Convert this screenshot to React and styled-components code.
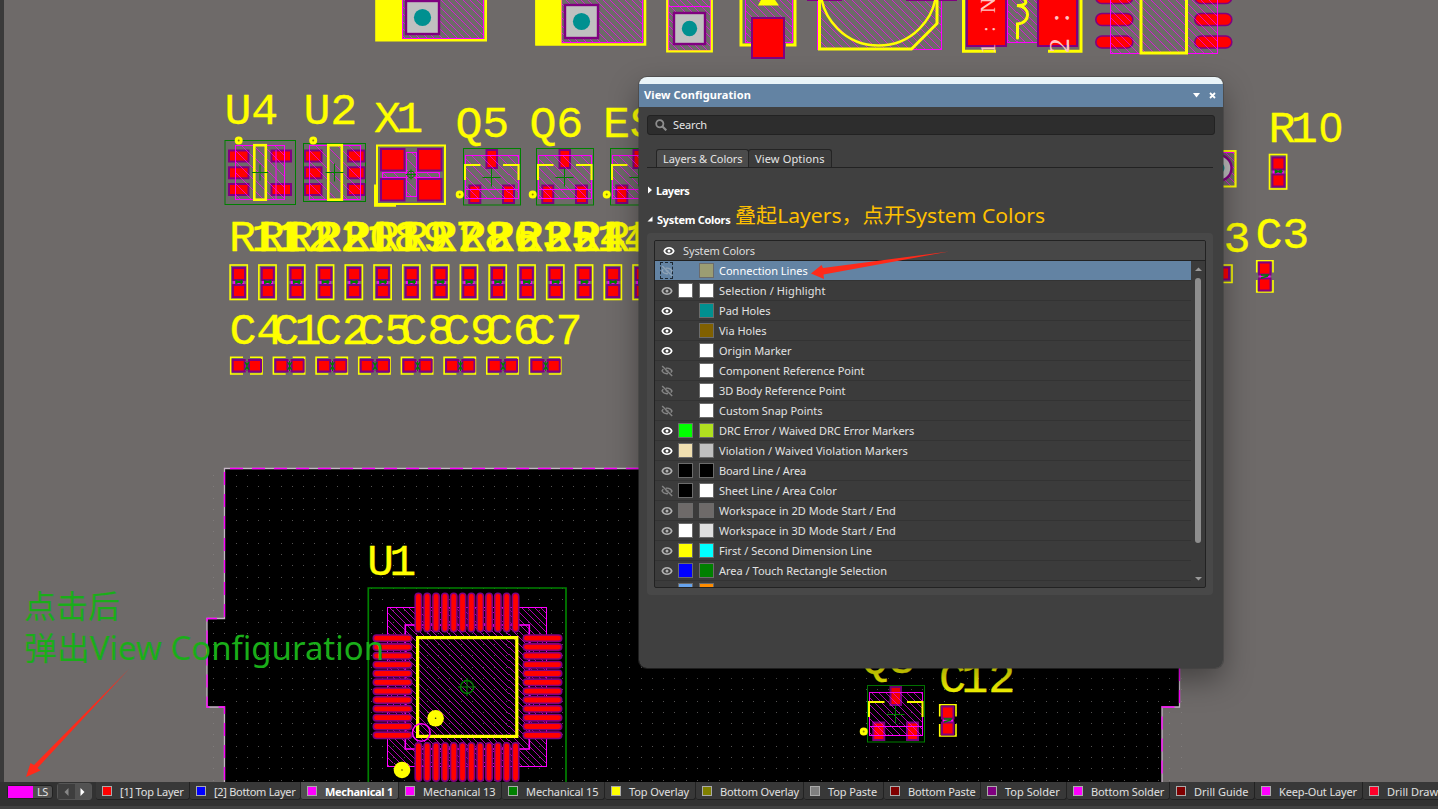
import React from "react";
import styled, { createGlobalStyle } from "styled-components";

const Y = "#ffff00";
const M = "#ff00ff";
const P = "#800080";
const R = "#ff0000";
const G = "#008000";

const GlobalStyle = createGlobalStyle`
  * { box-sizing: border-box; }
  html, body { margin: 0; padding: 0; overflow: hidden; background: #333; }
  body { font-family: "Noto Sans", "Noto Sans CJK SC", sans-serif; font-size: 11px; }
`;

const Frame = styled.div`
  position: relative;
  width: 1438px;
  height: 809px;
  overflow: hidden;
  display: flex;
  flex-direction: column;
  background: #323232;
`;

const Workspace = styled.main`
  height: 782px;
  border-left: 4px solid #3a3a3a;
  background: #6e6a69;
  overflow: hidden;
`;

const BoardSvg = styled.svg`
  display: block;
  width: 1434px;
  height: 782px;
`;

const Designator = styled.text`
  font-family: "Liberation Mono", monospace;
  font-size: 45px;
  fill: ${Y};
  stroke: ${Y};
  stroke-width: 0.3px;
  stroke-linejoin: round;
`;

const PadLabel = styled.text`
  font-family: "Liberation Serif", serif;
  fill: #ffc4c4;
`;

/* ---------- floating panel ---------- */

const Panel = styled.section`
  position: absolute;
  left: 639px;
  top: 77px;
  width: 584px;
  height: 591px;
  border-radius: 8px;
  overflow: hidden;
  background: #404040;
  display: flex;
  flex-direction: column;
`;

const PanelShadow = styled.div`
  position: absolute;
  left: 639px;
  top: 77px;
  width: 584px;
  height: 591px;
  border-radius: 8px;
  box-shadow: 0 0 0 1px rgba(60, 60, 60, 0.5), 0 12px 30px rgba(0, 0, 0, 0.38);
`;

const PanelCap = styled.div`
  height: 7px;
  background: #eaf4f8;
`;

const TitleBar = styled.header`
  height: 23px;
  background: #6383a3;
  display: flex;
  align-items: center;
  padding: 0 6px 2px 5px;
  color: #fff;
  font-weight: 700;
  font-size: 11px;
`;

const TitleIcons = styled.svg`
  width: 26px;
  height: 12px;
  margin: 1px 0 0 auto;
`;

const PanelBody = styled.div`
  flex: 1;
  padding: 8px 8px 0;
  display: flex;
  flex-direction: column;
`;

const SearchBox = styled.div`
  height: 20px;
  border: 1px solid #222;
  border-radius: 3px;
  background: #2d2d2d;
  color: #e6e6e6;
  display: flex;
  align-items: center;
  gap: 6px;
  padding: 0 0 2px 7px;
`;

const SearchIcon = styled.svg`
  width: 12px;
  height: 12px;
  margin-top: 2px;
`;

const TabStrip = styled.nav`
  display: flex;
  height: 19px;
  margin: 14px 2px 0 0;
  padding-left: 9px;
  border-bottom: 1px solid #222;
`;

const Tab = styled.div`
  width: ${(p) => p.$w}px;
  height: 18px;
  border: 1px solid #242424;
  border-bottom: 0;
  border-radius: 3px 3px 0 0;
  margin-right: -1px;
  background: ${(p) => (p.$active ? "#4b4b4b" : "#3c3c3c")};
  color: #e6e6e6;
  display: flex;
  align-items: center;
  padding-left: 6px;
  white-space: nowrap;
`;

const SectionTitle = styled.div`
  height: 16px;
  margin-top: ${(p) => p.$gap}px;
  display: flex;
  align-items: center;
  gap: 4px;
  color: #fff;
  font-weight: 700;
  font-size: 11px;
`;

const Group = styled.div`
  margin: 6px 2px 0 0;
  height: 362px;
  padding: 7px;
  border-radius: 4px;
  background: #484848;
`;

const List = styled.div`
  height: 348px;
  border: 1px solid #222;
  border-radius: 2px;
  overflow: hidden;
  background: #3b3b3b;
  display: flex;
  flex-direction: column;
`;

const ListHeader = styled.div`
  height: 20px;
  flex: none;
  border-bottom: 1px solid #222;
  background: #474747;
  color: #dedede;
  display: flex;
  align-items: center;
  padding-left: 8px;
  gap: 8px;
`;

const ListBody = styled.div`
  flex: 1;
  min-height: 0;
  display: flex;
`;

const Rows = styled.div`
  width: 536px;
  overflow: hidden;
`;

const Row = styled.div`
  height: 20px;
  border-bottom: 1px solid #333;
  background: ${(p) => (p.$selected ? "#6383a3" : "transparent")};
  color: ${(p) => (p.$selected ? "#fff" : "#e2e2e2")};
  display: grid;
  grid-template-columns: 23px 21px 20px 1fr;
  align-items: center;
`;

const EyeCell = styled.div`
  width: 13px;
  height: 17px;
  margin-left: 5px;
  outline: ${(p) => (p.$focus ? "1px dashed #1c2833" : "none")};
  outline-offset: -1px;
  display: flex;
  align-items: center;
  justify-content: flex-end;
`;

const Swatch = styled.div`
  width: 15px;
  height: 15px;
  border: 1px solid #6b6b6b;
  background: ${(p) => p.$c};
`;

const Blank = styled.div``;

const Label = styled.span`
  white-space: nowrap;
  letter-spacing: ${(p) => p.$ls || 0}px;
`;

const ScrollBar = styled.div`
  width: 14px;
  display: flex;
  flex-direction: column;
  align-items: center;
  justify-content: space-between;
  padding: 6px 0 6px;
`;

const ScrollThumb = styled.div`
  width: 6px;
  height: 265px;
  margin-bottom: 28px;
  border-radius: 3px;
  background: #8e8e8e;
`;

const ScrollArrow = styled.svg`
  width: 7px;
  height: 4px;
  flex: none;
`;

/* ---------- layer bar ---------- */

const LayerBar = styled.footer`
  height: 27px;
  padding-left: 7px;
  display: flex;
  background: #323232;
  border-bottom: 3px solid #414141;
  color: #e4e4e4;
`;

const LayerSet = styled.div`
  flex: none;
  width: 46px;
  height: 14px;
  margin: 3px 4px 0 0;
  border: 1px solid #222;
  border-radius: 3px;
  background: #505050;
  display: flex;
  align-items: center;
  line-height: 12px;
`;

const LayerSetColor = styled.div`
  width: 25px;
  height: 12px;
  margin-right: 4px;
  background: ${M};
`;

const Pager = styled.div`
  flex: none;
  width: 35px;
  height: 17px;
  margin: 1px 4px 0 0;
  border: 1px solid #555;
  border-radius: 3px;
  background: #4a4a4a;
  display: flex;
`;

const PagerButton = styled.div`
  flex: 1;
  display: flex;
  align-items: center;
  justify-content: center;
  background: ${(p) => (p.$on ? "#525252" : "#3e3e3e")};
`;

const LayerTab = styled.div`
  flex: none;
  width: ${(p) => p.$w}px;
  height: 18px;
  padding: 1px 0 0 6px;
  display: flex;
  align-items: center;
  border-right: 1px solid #222;
  border-bottom: 1px solid #222;
  border-radius: 0 0 3px 3px;
  background: ${(p) => (p.$active ? "#505050" : "#383838")};
  color: ${(p) => (p.$active ? "#fff" : "#e0e0e0")};
  font-weight: ${(p) => (p.$active ? 700 : 400)};
  white-space: nowrap;
`;

const LayerColor = styled.div`
  width: 10px;
  height: 10px;
  margin: 0 8px 1px 0;
  border: 1px solid #aaa;
  background: ${(p) => p.$c};
`;

const Notes = styled.svg`
  position: absolute;
  left: 0;
  top: 0;
  width: 1438px;
  height: 809px;
  pointer-events: none;
`;

const NoteText = styled.text`
  font-family: "Noto Sans", "Noto Sans CJK SC", sans-serif;
`;

/* ---------- board drawing ---------- */

const Hatch = ({ x, y, w, h, step = 8 }) => {
  const left = Math.floor(x) + 0.5;
  const top = Math.floor(y) + 0.5;
  const width = Math.round(w);
  const height = Math.round(h);
  let d = "";
  for (let s = -height + step / 2; s < width; s += step) {
    const k = Math.round(s);
    const x1 = Math.max(0, k);
    const y1 = x1 - k;
    const t = Math.min(width - x1, height - y1);
    if (t > 0) d += `M${left + x1} ${top + y1}l${t} ${t}`;
  }
  return (
    <g fill="none" stroke={M}>
      <path d={d} strokeWidth="0.7" shapeRendering="crispEdges" />
      <rect x={left} y={top} width={width} height={height} strokeWidth="1" />
    </g>
  );
};

const Pad = ({ x, y, w, h }) => (
  <rect x={x + 1} y={y + 1} width={w - 2} height={h - 2} fill={R} stroke={P} strokeWidth="2" />
);

const Cross = ({ x, y, s = 8 }) => (
  <path d={`M${x - s} ${y}h${2 * s}M${x} ${y - s}v${2 * s}`} stroke={G} strokeWidth="1" />
);

const Dot = ({ x, y }) => <circle cx={x} cy={y} r="2.5" fill="#8a8700" stroke={Y} strokeWidth="3" />;

const ResistorV = ({ x, y = 264.5 }) => (
  <g>
    <rect x={x + 0.8} y={y + 0.5} width="17.2" height="34.5" fill="none" stroke={Y} strokeWidth="1.6" />
    <rect x={x + 4} y={y + 15} width="11" height="5" fill={M} />
    <Pad x={x + 2.7} y={y + 2.5} w={14} h={14} />
    <Pad x={x + 2.7} y={y + 19.5} w={14} h={14} />
    <path d={`M${x + 6} ${y + 16}l7 3M${x + 6} ${y + 19}l7 -3M${x + 6} ${y + 17.5}h8`} stroke={G} strokeWidth="1.4" />
  </g>
);

const CapacitorH = ({ x }) => (
  <g>
    <path d={`M${x + 13} 357.3H${x + 0.7}V374H${x + 13}M${x + 20} 357.3H${x + 32}V374H${x + 20}`} fill="none" stroke={Y} strokeWidth="1.6" />
    <rect x={x + 14} y="361" width="5" height="10" fill={M} />
    <Pad x={x + 1.7} y={359} w={14} h={13.5} />
    <Pad x={x + 18} y={359} w={14} h={13.5} />
    <path d={`M${x + 15} 362l4 8M${x + 19} 362l-4 8M${x + 17} 361v10`} stroke={G} strokeWidth="1.2" />
  </g>
);

const CapacitorV = ({ x, y }) => (
  <g>
    <path d={`M${x + 0.7} ${y + 12.5}V${y + 0.7}H${x + 17}V${y + 12.5}M${x + 0.7} ${y + 20}V${y + 32}H${x + 17}V${y + 20}`} fill="none" stroke={Y} strokeWidth="1.6" />
    <rect x={x + 3.5} y={y + 13} width="11" height="6" fill={M} />
    <Pad x={x + 2} y={y + 1.5} w={13.5} h={14} />
    <Pad x={x + 2} y={y + 17.5} w={13.5} h={14} />
    <path d={`M${x + 5} ${y + 15}h8M${x + 5} ${y + 18}l7 -2`} stroke={G} strokeWidth="1.6" />
  </g>
);

const Transistor = ({ x, y, step = 9 }) => (
  <g transform={`translate(${x} ${y})`}>
    <rect x="0.5" y="0.5" width="57" height="56.5" fill="none" stroke={G} />
    <Pad x={22.5} y={1} w={12.5} h={20} />
    <Pad x={5.3} y={36.5} w={13} h={19.5} />
    <Pad x={39} y={36.5} w={13} h={19.5} />
    <Hatch x={2.5} y={7.5} w={53} h={43} step={step} />
    <path d="M2.5 41.5h53" stroke={M} />
    <path d="M17.5 17H2V32M40 17H55.5V32" fill="none" stroke={Y} strokeWidth="2" />
    <Cross x={28.5} y={29.5} s={9} />
    <Dot x={-3.3} y={46.5} />
  </g>
);

const Name = ({ t, x, y }) => {
  const chars = t.split("");
  let cx = x - 2.5;
  const parts = chars.map((c, i) => {
    const left = c === "1" ? cx - 4.5 : c === "0" ? cx + 1.5 : cx;
    cx += c === "1" ? 22.5 : 26.7;
    return (
      <tspan key={i} x={left} fontFamily={c === "0" ? "Liberation Sans" : undefined} fontSize={c === "0" ? 42 : undefined}>
        {c}
      </tspan>
    );
  });
  return <Designator y={y}>{parts}</Designator>;
};

const gridDots = () => {
  let d = "";
  for (let i = 0; i < 87; i++) {
    for (let j = 0; j < 28; j++) {
      const x = Math.round(213 + i * 11.25);
      const y = Math.round(475 + j * 11.28);
      if (x < 1182) d += `M${x} ${y}h1v1h-1z`;
    }
  }
  return d;
};

const HolePad = ({ x, y, s, r }) => (
  <g>
    <rect x={x + 1} y={y + 1} width={s - 2} height={s - 2} fill="#c0c0c0" stroke={P} strokeWidth="2.4" />
    <circle cx={x + s / 2} cy={y + s / 2} r={r} fill="#009090" />
  </g>
);

const QfpPads = () => {
  const pads = [];
  for (let i = 0; i < 12; i++) {
    const x = 418.4 + i * 8.83;
    const y = 638.2 + i * 8.83;
    pads.push(`M${x} 596.5V628.5M${x} 746V778M376.5 ${y}H408.5M526.5 ${y}H558.5`);
  }
  const d = pads.join("");
  return (
    <g fill="none" strokeLinecap="round">
      <path d={d} stroke={P} strokeWidth="8" />
      <path d={d} stroke={R} strokeWidth="4.8" />
    </g>
  );
};

const rNames = ["R11", "R12", "R22", "R20", "R18", "R19", "R27", "R28", "R26", "R23", "R25", "R24", "R14", "R11", "R13"];
const cNames = ["C4", "C1", "C2", "C5", "C8", "C9", "C6", "C7"];
const outline = "M639 468.5H224.5V618.5H207V707H224.5V782";
const outlineRight = "M1179.5 668V707H1162V782";

const Board = () => (
  <BoardSvg viewBox="4 0 1434 782">
    <path d="M224.5 468.5H1179.5V707H1162V782H224.5V707H207V618.5H224.5Z" fill="#000" />
    <path d={gridDots()} fill="#8c8888" opacity="0.6" shapeRendering="crispEdges" />
    {[outline, outlineRight].map((d) => (
      <g key={d} fill="none" strokeWidth="1.3">
        <path d={d} stroke="#c8b4c8" />
        <path d={d} stroke={M} strokeDasharray="13 9" />
      </g>
    ))}

    {/* connectors along the upper edge */}
    <Hatch x={402} y={-40} w={81} h={78} step={7.3} />
    <path d="M376.5 -5V40.2H485.7V-5" fill="none" stroke={Y} strokeWidth="2.6" />
    <rect x="376" y="-5" width="26" height="46" fill={Y} />
    <HolePad x={405} y={0} s={35} r={8.6} />
    <Hatch x={561} y={-40} w={81} h={82} step={7.3} />
    <path d="M536.5 -5V44.5H645V-5" fill="none" stroke={Y} strokeWidth="2.6" />
    <rect x="535.5" y="-5" width="26" height="50" fill={Y} />
    <HolePad x={564} y={4} s={35} r={8.6} />
    <Hatch x={668.5} y={-37} w={42} h={87} step={7.3} />
    <path d="M668 6.5h43" stroke={M} />
    <path d="M667.2 -5V51.3H711.8V-5" fill="none" stroke={Y} strokeWidth="2.2" />
    <HolePad x={673} y={12} s={33} r={7.7} />

    <Hatch x={745.5} y={-20} w={46.5} h={62} step={7.3} />
    <path d="M741 -5V45H752M786 45H795V-5" fill="none" stroke={Y} strokeWidth="3" />
    <path d="M758 5.5L762.5 -3H773L779 5.5Z" fill={Y} />
    <Pad x={751} y={17} w={34} h={42} />

    <Hatch x={817} y={-60} w={124} h={108.5} step={8} />
    <path d="M807 0h35M906 0h51" stroke={P} strokeWidth="2" />
    <path d="M819.5 -5V49H911.5L937 23.5V-5" fill="none" stroke={Y} strokeWidth="3" />
    <circle cx="878.5" cy="-12.5" r="58" fill="none" stroke={Y} strokeWidth="2.5" />

    <Hatch x={1007} y={-20} w={31} h={61.5} step={7.3} />
    <Pad x={966} y={-10} w={41} h={57} />
    <Pad x={1037} y={-10} w={41} h={57} />
    <path d="M963.5 -5V51.3H996M1048 51.3H1081V-5" fill="none" stroke={Y} strokeWidth="3" />
    <path d="M1025 0C1028 4 1022 6 1017 5.5C1031 6 1031 23 1017.5 24V38" fill="none" stroke={Y} strokeWidth="3" strokeLinecap="round" />
    <PadLabel fontSize="21" transform="translate(995 54) rotate(-90)">
      <tspan x="0">1</tspan>
      <tspan x="22">:</tspan>
      <tspan x="41">No</tspan>
    </PadLabel>
    <PadLabel fontSize="30" transform="translate(1069 53) rotate(-90)">
      <tspan x="0">2</tspan>
      <tspan x="31">:</tspan>
    </PadLabel>

    {[-2.5, 19.5, 42].map((y) => (
      <g key={y} fill={R} stroke={P} strokeWidth="1.6">
        <rect x="1095.8" y={y - 6} width="37" height="12" rx="6" />
        <rect x="1194.8" y={y - 6} width="37" height="12" rx="6" />
      </g>
    ))}
    <Hatch x={1110.5} y={-60} w={106.5} h={112.5} step={8.2} />
    <path d="M1141 -5V53H1186.5V-5" fill="none" stroke={Y} strokeWidth="3" />

    {/* small ICs */}
    <rect x="225" y="140.5" width="70.5" height="64" fill="none" stroke={G} />
    {[149.5, 166.3, 183].map((y) => <Pad key={y} x={228} y={y} w={21.5} h={13} />)}
    {[149.5, 183].map((y) => <Pad key={y} x={270.5} y={y} w={21.5} h={13} />)}
    <Hatch x={235.5} y={145.5} w={49} h={53.5} step={11} />
    <path d="M235 145.5h42M244 199.5h32M276 150v50" stroke={M} fill="none" />
    <rect x="254.3" y="145.2" width="11.5" height="54.5" fill="none" stroke={Y} strokeWidth="2.6" />
    <Cross x={260} y={172.5} />
    <Dot x={238.7} y={140.5} />

    <rect x="303.5" y="143.5" width="62" height="58" fill="none" stroke={G} />
    {[149.5, 166.3, 183].map((y) => (
      <g key={y}>
        <Pad x={304} y={y} w={18.5} h={13} />
        <Pad x={347} y={y} w={18.5} h={13} />
      </g>
    ))}
    <Hatch x={309.5} y={145.5} w={50.5} h={53.5} step={11} />
    <rect x="328.3" y="145.2" width="13.5" height="54.5" fill="none" stroke={Y} strokeWidth="2.6" />
    <Cross x={334.5} y={172.5} s={9} />
    <Dot x={313.2} y={140.5} />

    <Hatch x={406} y={152.5} w={10} h={44} step={11} />
    <Hatch x={382.5} y={172} w={57} h={5} step={11} />
    <rect x="377" y="145.5" width="68" height="58.5" fill="none" stroke={Y} strokeWidth="2" />
    <path d="M375.2 184.5V205.5H396" fill="none" stroke={Y} strokeWidth="2.4" />
    {[380, 417].map((x) => [148, 178].map((y) => <Pad key={`${x}-${y}`} x={x} y={y} w={25.5} h={23.5} />))}
    <circle cx="411" cy="174.5" r="3.5" fill="none" stroke={G} />
    <Cross x={411} y={174.5} s={5} />

    <Transistor x={463} y={148} />
    <Transistor x={536} y={148} />
    <Transistor x={610} y={148} />

    {rNames.map((n, i) => (
      <g key={i}>
        <ResistorV x={229.3 + i * 28.78} />
        <Name t={n} x={231.5 + i * 28.78} y={251} />
      </g>
    ))}
    {cNames.map((n, i) => (
      <g key={n}>
        <CapacitorH x={230 + i * 42.68} />
        <Name t={n} x={232 + i * 42.75} y={344} />
      </g>
    ))}

    <Name t="U4" x={227} y={124} />
    <Name t="U2" x={306} y={124} />
    <Name t="X1" x={376.5} y={132} />
    <Name t="Q5" x={458} y={136.5} />
    <Name t="Q6" x={532} y={136.5} />
    <Name t="ES" x={605.5} y={136.5} />

    {/* parts right of the panel */}
    <Name t="R10" x={1271} y={142} />
    <ResistorV x={1268.7} y={154} />
    <Name t="3" x={1226} y={251.5} />
    <Name t="C3" x={1258} y={248} />
    <CapacitorV x={1256} y={260} />
    <Hatch x={1200} y={152} w={35} h={33.5} step={7} />
    <path d="M1200 151H1235.5V186.5H1200" fill="none" stroke={Y} strokeWidth="2.2" />
    <circle cx="1218.5" cy="168" r="13" fill="#c0c0c0" stroke={P} strokeWidth="2.4" />
    <circle cx="1218.5" cy="168" r="6" fill="#009090" />
    <path d="M1215 265H1232V282.5H1215" fill="none" stroke={Y} strokeWidth="1.6" />
    <Pad x={1216} y={266.5} w={14} h={14} />

    {/* microcontroller */}
    <path d="M368.3 782V588H566V782" fill="none" stroke={G} strokeWidth="1.7" />
    <Hatch x={387.5} y={607.5} w={159} h={159} step={6.6} />
    <rect x="405.3" y="625" width="124" height="124" fill="none" stroke={M} strokeWidth="1.6" />
    <QfpPads />
    <rect x="417.6" y="637.6" width="99.2" height="98.8" fill="none" stroke={Y} strokeWidth="3.2" />
    <circle cx="467" cy="687" r="6.5" fill="none" stroke={G} strokeWidth="1.4" />
    <Cross x={467} y={687} s={9} />
    <circle cx="421.3" cy="732.5" r="8.8" fill="none" stroke={M} strokeWidth="1.5" />
    <circle cx="435.6" cy="718.3" r="8.3" fill={Y} />
    <circle cx="435.6" cy="718.3" r="0.8" fill="#222" />
    <circle cx="402" cy="770" r="8.3" fill={Y} />
    <rect x="401" y="769" width="2" height="2" fill="#b0a800" />
    <Name t="U1" x={369.5} y={575} />

    <Transistor x={867} y={685} step={7} />
    <Name t="Q3" x={864} y={673} />
    <Name t="C12" x={941.5} y={692} />
    <CapacitorV x={939} y={704} />
  </BoardSvg>
);

/* ---------- panel contents ---------- */

const Eye = ({ tone = "#a9a9a9", off }) => (
  <svg width="12" height="12" viewBox="0 0 12 12" fill="none">
    {off ? (
      <g stroke={tone}>
        <path d="M2.2 4.2L1 6C2.4 8.3 4.6 9 7 8.6M4.8 3.3C7.4 2.8 9.6 3.7 11 6L9.8 7.6" strokeWidth="1.4" />
        <path d="M5 5.4C5 6.8 6 7.2 7 7M6.3 4.8L7.3 5.8" strokeWidth="1" />
        <path d="M1.2 1L11.2 11" strokeWidth="1.4" />
      </g>
    ) : (
      <g stroke={tone}>
        <path d="M1.2 6C3 1.7 9 1.7 10.8 6C9 10.3 3 10.3 1.2 6Z" strokeWidth="1.6" />
        <circle cx="6" cy="6" r="1.5" fill={tone} stroke="none" />
      </g>
    )}
  </svg>
);

const rows = [
  { t: "Connection Lines", e: "off", b: "#9b9d73", sel: true },
  { t: "Selection / Highlight", e: "dim", a: "#fff", b: "#fff", ls: 0.1 },
  { t: "Pad Holes", e: "on", b: "#009090" },
  { t: "Via Holes", e: "on", b: "#806000" },
  { t: "Origin Marker", e: "on", b: "#fff" },
  { t: "Component Reference Point", e: "off", b: "#fff" },
  { t: "3D Body Reference Point", e: "off", b: "#fff", ls: -0.06 },
  { t: "Custom Snap Points", e: "off", b: "#fff" },
  { t: "DRC Error / Waived DRC Error Markers", e: "on", a: "#00ff00", b: "#b0e020", ls: -0.06 },
  { t: "Violation / Waived Violation Markers", e: "on", a: "#f0dfb0", b: "#c0c0c0", ls: 0.07 },
  { t: "Board Line / Area", e: "dim", a: "#000", b: "#000", ls: -0.12 },
  { t: "Sheet Line / Area Color", e: "off", a: "#000", b: "#fff" },
  { t: "Workspace in 2D Mode Start / End", e: "dim", a: "#6e6a69", b: "#6e6a69", ls: 0.03 },
  { t: "Workspace in 3D Mode Start / End", e: "dim", a: "#fff", b: "#e0e0e0", ls: 0.03 },
  { t: "First / Second Dimension Line", e: "dim", a: "#ffff00", b: "#00ffff" },
  { t: "Area / Touch Rectangle Selection", e: "dim", a: "#0000ff", b: "#008000" },
  { t: "", e: "none", a: "#66a3ee", b: "#ff8c00" },
];

const eyeTone = { on: "#ffffff", dim: "#b0b0b0", off: "#858585" };

const ColorRow = ({ row }) => (
  <Row $selected={row.sel}>
    <EyeCell $focus={row.sel}>
      {row.e !== "none" && <Eye tone={row.sel ? "#8fa3b6" : eyeTone[row.e]} off={row.e === "off"} />}
    </EyeCell>
    {row.a ? <Swatch $c={row.a} /> : <Blank />}
    <Swatch $c={row.b} />
    <Label $ls={row.ls}>{row.t}</Label>
  </Row>
);

const ViewConfiguration = () => (
  <Panel>
    <PanelCap />
    <TitleBar>
      <Label $ls={0.1}>View Configuration</Label>
      <TitleIcons viewBox="0 0 26 12" fill="none">
        <path d="M2 4h7L5.5 8.5z" fill="#fff" />
        <path d="M19 4l5 5M24 4L19 9" stroke="#fff" strokeWidth="1.8" />
      </TitleIcons>
    </TitleBar>
    <PanelBody>
      <SearchBox>
        <SearchIcon viewBox="0 0 12 12" fill="none" stroke="#8d8d8d">
          <circle cx="4.8" cy="4.8" r="3.6" strokeWidth="1.8" />
          <path d="M7.5 7.5L11.3 11.3" strokeWidth="2.2" />
        </SearchIcon>
        <Label $ls={-0.15}>Search</Label>
      </SearchBox>
      <TabStrip>
        <Tab $active $w={93}><Label $ls={-0.05}>Layers &amp; Colors</Label></Tab>
        <Tab $w={84}><Label $ls={0.15}>View Options</Label></Tab>
      </TabStrip>
      <SectionTitle $gap={14}>
        <svg width="5" height="8" viewBox="0 0 5 8"><path d="M1 0.5L5 4L1 7.5Z" fill="#fff" /></svg>
        <Label $ls={-0.45}>Layers</Label>
      </SectionTitle>
      <SectionTitle $gap={13}>
        <svg width="6" height="6" viewBox="0 0 6 6"><path d="M5.5 0.5V5.5H0.5Z" fill="#fff" /></svg>
        <Label $ls={-0.3}>System Colors</Label>
      </SectionTitle>
      <Group>
        <List>
          <ListHeader>
            <Eye tone="#fff" />
            <Label $ls={-0.1}>System Colors</Label>
          </ListHeader>
          <ListBody>
            <Rows>
              {rows.map((r, i) => <ColorRow key={i} row={r} />)}
            </Rows>
            <ScrollBar>
              <ScrollArrow viewBox="0 0 7 4"><path d="M0 4L3.5 0.5L7 4Z" fill="#9a9a9a" /></ScrollArrow>
              <ScrollThumb />
              <ScrollArrow viewBox="0 0 7 4"><path d="M0 0L3.5 3.5L7 0Z" fill="#9a9a9a" /></ScrollArrow>
            </ScrollBar>
          </ListBody>
        </List>
      </Group>
    </PanelBody>
  </Panel>
);

const layers = [
  { t: "[1] Top Layer", c: "#ff0000", w: 94, ls: -0.2 },
  { t: "[2] Bottom Layer", c: "#0000ff", w: 111, ls: -0.3 },
  { t: "Mechanical 1", c: "#ff00ff", w: 98, ls: -0.3, active: true },
  { t: "Mechanical 13", c: "#ff00ff", w: 103, ls: -0.1 },
  { t: "Mechanical 15", c: "#008000", w: 103, ls: -0.1 },
  { t: "Top Overlay", c: "#ffff00", w: 91, ls: -0.1 },
  { t: "Bottom Overlay", c: "#808000", w: 108, ls: -0.15 },
  { t: "Top Paste", c: "#808080", w: 80, ls: -0.1 },
  { t: "Bottom Paste", c: "#800000", w: 97, ls: -0.2 },
  { t: "Top Solder", c: "#800080", w: 86 },
  { t: "Bottom Solder", c: "#ff00ff", w: 103, ls: -0.1 },
  { t: "Drill Guide", c: "#800000", w: 85 },
  { t: "Keep-Out Layer", c: "#ff00ff", w: 108, ls: -0.15 },
  { t: "Drill Drawing", c: "#ff002a", w: 100 },
];

export default function App() {
  return (
    <Frame>
      <GlobalStyle />
      <Workspace><Board /></Workspace>
      <LayerBar>
        <LayerSet><LayerSetColor /><Label $ls={-0.5}>LS</Label></LayerSet>
        <Pager>
          <PagerButton>
            <svg width="5" height="8" viewBox="0 0 5 8"><path d="M4.5 0V8L0.5 4Z" fill="#888" /></svg>
          </PagerButton>
          <PagerButton $on>
            <svg width="5" height="8" viewBox="0 0 5 8"><path d="M0.5 0V8L4.5 4Z" fill="#fff" /></svg>
          </PagerButton>
        </Pager>
        {layers.map((l) => (
          <LayerTab key={l.t} $w={l.w} $active={l.active}>
            <LayerColor $c={l.c} />
            <Label $ls={l.ls}>{l.t}</Label>
          </LayerTab>
        ))}
      </LayerBar>
      <PanelShadow />
      <ViewConfiguration />
      <Notes viewBox="0 0 1438 809">
        <NoteText x="735" y="223" fontSize="20.5" fill="#ffc000" textLength="310" lengthAdjust="spacingAndGlyphs">叠起Layers，点开System Colors</NoteText>
        <NoteText x="24" y="618" fontSize="32" fill="#1aad19" textLength="96" lengthAdjust="spacingAndGlyphs">点击后</NoteText>
        <NoteText x="24" y="660" fontSize="32" fill="#1aad19" textLength="360" lengthAdjust="spacingAndGlyphs">弹出View Configuration</NoteText>
        <path d="M949 251.5L823 268L821.5 265L811 273.5L824 279L823.5 274.5Z" fill="#ff2a1a" />
        <path d="M129 669L34 765L30.5 763L26 777L40.5 770.5L37.5 768Z" fill="#ff2a1a" />
      </Notes>
    </Frame>
  );
}
